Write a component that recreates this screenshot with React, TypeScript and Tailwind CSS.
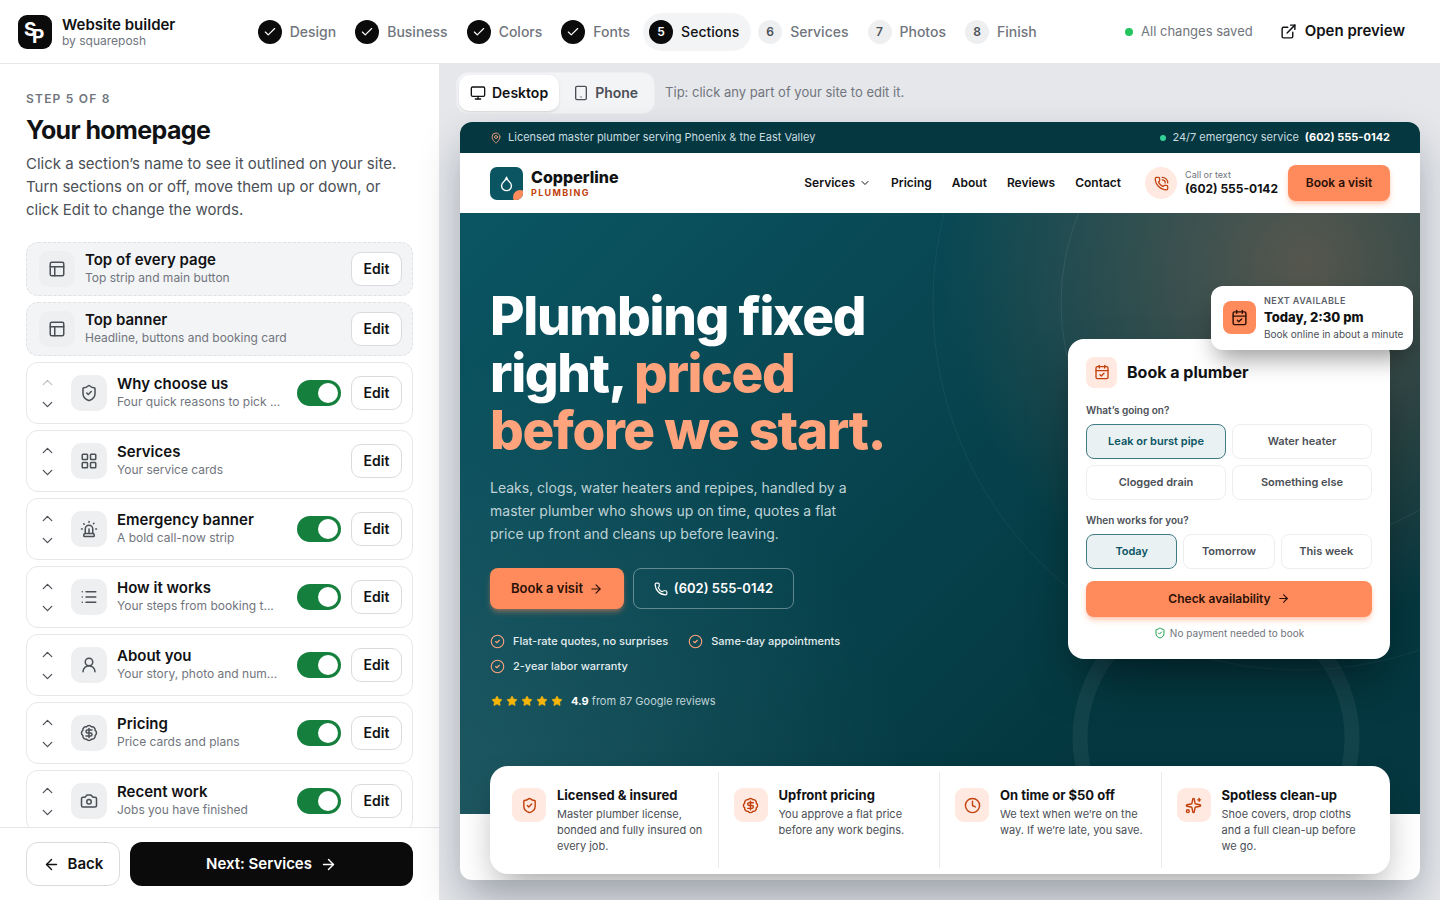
import React, { useState } from 'react';
import {
    ArrowLeft,
    ArrowRight,
    BadgeDollarSign,
    CalendarCheck,
    Camera,
    Check,
    ChevronDown,
    ChevronUp,
    CircleCheck,
    Clock,
    Droplet,
    ExternalLink,
    LayoutGrid,
    List,
    MapPin,
    Monitor,
    PanelsTopLeft,
    Phone,
    PhoneCall,
    ShieldCheck,
    Siren,
    Sparkles,
    Star,
    Tablet,
    UserRound,
    type LucideIcon,
} from 'lucide-react';

const CURRENT_STEP = 5;
const STEPS = ['Design', 'Business', 'Colors', 'Fonts', 'Sections', 'Services', 'Photos', 'Finish'];

interface Section {
    title: string;
    description: string;
    icon: LucideIcon;
    required?: boolean;
}

const FIXED_SECTIONS: Section[] = [
    { title: 'Top of every page', description: 'Top strip and main button', icon: PanelsTopLeft },
    { title: 'Top banner', description: 'Headline, buttons and booking card', icon: PanelsTopLeft },
];

const SECTIONS: Section[] = [
    { title: 'Why choose us', description: 'Four quick reasons to pick ...', icon: ShieldCheck },
    { title: 'Services', description: 'Your service cards', icon: LayoutGrid, required: true },
    { title: 'Emergency banner', description: 'A bold call-now strip', icon: Siren },
    { title: 'How it works', description: 'Your steps from booking t...', icon: List },
    { title: 'About you', description: 'Your story, photo and num...', icon: UserRound },
    { title: 'Pricing', description: 'Price cards and plans', icon: BadgeDollarSign },
    { title: 'Recent work', description: 'Jobs you have finished', icon: Camera },
];

const FEATURES: { title: string; text: string; icon: LucideIcon }[] = [
    { title: 'Licensed & insured', text: 'Master plumber license, bonded and fully insured on every job.', icon: ShieldCheck },
    { title: 'Upfront pricing', text: 'You approve a flat price before any work begins.', icon: BadgeDollarSign },
    { title: 'On time or $50 off', text: 'We text when we’re on the way. If we’re late, you save.', icon: Clock },
    { title: 'Spotless clean-up', text: 'Shoe covers, drop cloths and a full clean-up before we go.', icon: Sparkles },
];

const Logo: React.FC = () => (
    <svg viewBox="0 0 34 34" className="size-[34px] shrink-0" role="img" aria-label="squareposh">
        <rect width="34" height="34" rx="9" fill="#0b0b0c" />
        <g fill="#fff" fontFamily="Inter, sans-serif" fontWeight="700">
            <text x="6" y="21" fontSize="19">S</text>
            <text x="14" y="28" fontSize="19">P</text>
        </g>
    </svg>
);

const TopBar: React.FC = () => (
    <header className="flex h-16 shrink-0 items-center justify-between border-b border-[#e5e7eb] bg-white pl-[18px] pr-6">
        <div className="flex items-center gap-2.5">
            <Logo />
            <div>
                <div className="text-[15px] leading-[18px] font-semibold text-[#111214]">Website builder</div>
                <div className="text-xs leading-[14px] text-[#71757d]">by squareposh</div>
            </div>
        </div>
        <nav aria-label="Steps" className="flex items-center gap-px">
            {STEPS.map((name, idx) => {
                const step = idx + 1;
                const done = step < CURRENT_STEP;
                const current = step === CURRENT_STEP;
                return (
                    <button
                        key={name}
                        aria-current={current ? 'step' : undefined}
                        className={`flex items-center gap-2 rounded-full py-[7px] pl-1.5 pr-3 text-sm font-medium ${current ? 'bg-[#f3f4f6] text-[#111214]' : 'text-[#71757d]'}`}
                    >
                        <span
                            className={`flex size-6 items-center justify-center rounded-full text-xs font-semibold ${done || current ? 'bg-[#0b0b0c] text-white' : 'bg-[#eeeff1] text-[#4b4f56]'}`}
                        >
                            {done ? <Check size={14} /> : step}
                        </span>
                        {name}
                    </button>
                );
            })}
        </nav>
        <div className="flex items-center gap-4">
            <span className="flex items-center gap-2 text-[13px] text-[#71757d]">
                <span className="size-2 rounded-full bg-[#22c55e]" />
                All changes saved
            </span>
            <a href="#preview" className="flex items-center gap-2 px-[11px] py-2 text-[15px] font-semibold text-[#111214]">
                <ExternalLink size={17} />
                Open preview
            </a>
        </div>
    </header>
);

const EditButton: React.FC<{ title: string }> = ({ title }) => (
    <button
        aria-label={`Edit ${title}`}
        className="h-[34px] w-[51px] shrink-0 rounded-[10px] border border-[#d9dbdf] bg-white text-sm font-semibold text-[#111214]"
    >
        Edit
    </button>
);

const SectionLabel: React.FC<{ section: Section }> = ({ section }) => {
    const Icon = section.icon;
    return (
        <>
            <span className="flex size-9 shrink-0 items-center justify-center rounded-[10px] bg-[#eeeff1] text-[#4b4f56]">
                <Icon size={18} />
            </span>
            <button className="min-w-0 flex-1 text-left">
                <span className="block truncate text-[15px] leading-[18px] font-semibold text-[#111214]">{section.title}</span>
                <span className="block truncate text-xs leading-[18px] text-[#71757d]">{section.description}</span>
            </button>
        </>
    );
};

const SectionRow: React.FC<{ section: Section; first: boolean }> = ({ section, first }) => {
    const [enabled, setEnabled] = useState(true);

    return (
        <li className="flex h-[62px] shrink-0 items-center gap-2.5 rounded-xl border border-[#e5e7eb] bg-white pl-1 pr-2.5">
            <span className="-mr-0.5 flex w-8 shrink-0 flex-col items-center text-[#4b4f56]">
                <button aria-label={`Move ${section.title} up`} disabled={first} className="flex h-[22px] w-8 items-center justify-center disabled:opacity-35">
                    <ChevronUp size={17} strokeWidth={1.75} />
                </button>
                <button aria-label={`Move ${section.title} down`} className="flex h-[22px] w-8 items-center justify-center">
                    <ChevronDown size={17} strokeWidth={1.75} />
                </button>
            </span>
            <SectionLabel section={section} />
            {!section.required && (
                <label className="relative h-[26px] w-11 shrink-0 cursor-pointer">
                    <input
                        type="checkbox"
                        role="switch"
                        aria-label={`Show ${section.title}`}
                        checked={enabled}
                        onChange={() => setEnabled(!enabled)}
                        className="peer sr-only"
                    />
                    <span className="flex h-full items-center rounded-full bg-[#c9ccd1] px-[3px] peer-checked:justify-end peer-checked:bg-[#15803d]">
                        <span className="size-5 rounded-full bg-white" />
                    </span>
                </label>
            )}
            <EditButton title={section.title} />
        </li>
    );
};

const Sidebar: React.FC = () => (
    <aside className="flex w-[440px] shrink-0 flex-col border-r border-[#e5e7eb] bg-white">
        <div className="min-h-0 flex-1 overflow-y-auto px-[26px] pt-[26px] [scrollbar-width:none]">
            <p className="text-xs leading-[18px] font-semibold tracking-widest text-[#71757d]">STEP 5 OF 8</p>
            <h1 className="mt-1.5 text-[25px] leading-8 font-bold tracking-tight text-[#111214]">Your homepage</h1>
            <p className="mt-1.5 text-[15px] leading-[23px] text-[#4b4f56]">
                Click a section’s name to see it outlined on your site. Turn sections on or off, move them up or down, or click Edit to change the words.
            </p>
            <ul className="mt-[21px] flex flex-col gap-1.5 pb-6">
                {FIXED_SECTIONS.map((section) => (
                    <li key={section.title} className="flex h-[54px] shrink-0 items-center gap-2.5 rounded-xl border border-dashed border-[#dfe1e5] bg-[#f3f4f6] pl-3 pr-2.5">
                        <SectionLabel section={section} />
                        <EditButton title={section.title} />
                    </li>
                ))}
                {SECTIONS.map((section, idx) => (
                    <SectionRow key={section.title} section={section} first={idx === 0} />
                ))}
            </ul>
        </div>
        <div className="flex shrink-0 gap-2.5 border-t border-[#e5e7eb] px-[26px] py-3.5">
            <button className="flex h-11 w-[94px] items-center justify-center gap-2 rounded-xl border border-[#d9dbdf] text-[15px] font-semibold text-[#111214]">
                <ArrowLeft size={17} />
                Back
            </button>
            <button className="flex h-11 flex-1 items-center justify-center gap-2 rounded-xl bg-[#0b0b0c] text-[15px] font-semibold text-white">
                Next: Services
                <ArrowRight size={17} />
            </button>
        </div>
    </aside>
);

const Toolbar: React.FC = () => (
    <div className="flex items-center gap-2.5 pt-2 pl-4">
        <div className="flex rounded-xl border border-[#eceef1] bg-[#f3f4f6] p-0.5 text-sm font-semibold">
            <button aria-pressed="true" className="flex h-9 items-center gap-1.5 rounded-[10px] bg-white px-[11px] text-[#111214] shadow-sm">
                <Monitor size={16} />
                Desktop
            </button>
            <button aria-pressed="false" className="flex h-9 items-center gap-1.5 rounded-[10px] px-3.5 text-[#4b4f56]">
                <Tablet size={16} />
                Phone
            </button>
        </div>
        <p className="text-[13px] text-[#71757d]">Tip: click any part of your site to edit it.</p>
    </div>
);

const SiteHeader: React.FC = () => (
    <>
        <div className="flex h-[31px] shrink-0 items-center justify-between bg-[#04373f] px-[30px] text-[11px] text-[#c9dde0]">
            <span className="flex items-center gap-1.5">
                <MapPin size={12} strokeWidth={1.75} className="text-[#ffa37d]" />
                Licensed master plumber serving Phoenix &amp; the East Valley
            </span>
            <span className="flex items-center gap-1.5">
                <span className="size-1.5 rounded-full bg-[#34d399]" />
                24/7 emergency service
                <a href="#call" className="font-bold text-white">(602) 555-0142</a>
            </span>
        </div>
        <div className="flex h-[60px] shrink-0 items-center bg-white px-[30px]">
            <a href="#home" className="flex items-center gap-2">
                <span className="relative flex size-[33px] items-center justify-center overflow-hidden rounded-[7px] bg-[#0b5563] text-white">
                    <Droplet size={17} />
                    <span className="absolute -right-1 -bottom-1 size-[14px] rounded-full bg-[#ff8a5b]" />
                </span>
                <span className="flex flex-col">
                    <span className="text-base leading-[19px] font-extrabold text-[#111214]">Copperline</span>
                    <span className="text-[9px] leading-3 font-bold tracking-[0.15em] text-[#c2410c]">PLUMBING</span>
                </span>
            </a>
            <nav className="ml-auto flex items-center gap-5 text-xs font-semibold text-[#111214]">
                <a href="#services" className="flex items-center gap-1">
                    Services
                    <ChevronDown size={12} />
                </a>
                <a href="#pricing">Pricing</a>
                <a href="#about">About</a>
                <a href="#reviews">Reviews</a>
                <a href="#contact">Contact</a>
            </nav>
            <div className="ml-6 flex items-center gap-2">
                <span className="flex size-8 items-center justify-center rounded-full bg-[#ffe9e0] text-[#c2410c]">
                    <PhoneCall size={15} />
                </span>
                <span className="flex flex-col">
                    <span className="text-[9px] leading-3 text-[#71757d]">Call or text</span>
                    <a href="#call" className="text-xs leading-4 font-bold text-[#111214]">(602) 555-0142</a>
                </span>
            </div>
            <button className="ml-2.5 h-9 w-[102px] rounded-lg bg-[#ff8a5b] text-xs font-semibold text-[#2a1006] shadow-md shadow-[#ff8a5b]/40">
                Book a visit
            </button>
        </div>
    </>
);

const Option: React.FC<{ group: string; label: string; selected: string; onSelect: (label: string) => void }> = ({ group, label, selected, onSelect }) => (
    <label
        className={`relative flex h-[35px] cursor-pointer items-center justify-center rounded-lg border text-[11px] font-semibold ${selected === label ? 'border-[#3f7b86] bg-[#eaf1f3] text-[#0b5563]' : 'border-[#eceef0] bg-white text-[#4b4f56]'}`}
    >
        <input type="radio" name={group} checked={selected === label} onChange={() => onSelect(label)} className="sr-only" />
        {label}
    </label>
);

const BookingCard: React.FC = () => {
    const [issue, setIssue] = useState('Leak or burst pipe');
    const [day, setDay] = useState('Today');

    return (
        <div className="relative w-[322px] shrink-0 rounded-2xl bg-white p-[18px] shadow-[0_24px_48px_-12px_rgba(0,0,0,0.5)]">
            <div className="absolute -top-[53px] -right-[23px] flex w-[202px] items-center gap-2 rounded-xl bg-white py-2 pl-3 shadow-[0_14px_24px_-6px_rgba(0,0,0,0.4)]">
                <span className="flex size-[33px] shrink-0 items-center justify-center rounded-lg bg-[#ff8a5b] text-[#2a1006]">
                    <CalendarCheck size={17} />
                </span>
                <span className="flex flex-col whitespace-nowrap">
                    <span className="text-[9px] leading-[14px] font-semibold tracking-wider text-[#5c6068]">NEXT AVAILABLE</span>
                    <span className="text-[13px] leading-[18px] font-extrabold text-[#111214]">Today, 2:30 pm</span>
                    <span className="text-[10px] leading-4 text-[#4b4f56]">Book online in about a minute</span>
                </span>
            </div>
            <h3 className="flex items-center gap-2.5 text-base font-bold text-[#111214]">
                <span className="flex size-[31px] items-center justify-center rounded-lg bg-[#ffe9e0] text-[#c2410c]">
                    <CalendarCheck size={16} />
                </span>
                Book a plumber
            </h3>
            <fieldset className="mt-3.5">
                <legend className="text-[10px] leading-4 font-semibold text-[#4b4f56]">What’s going on?</legend>
                <div className="mt-1.5 grid grid-cols-2 gap-1.5">
                    {['Leak or burst pipe', 'Water heater', 'Clogged drain', 'Something else'].map((label) => (
                        <Option key={label} group="issue" label={label} selected={issue} onSelect={setIssue} />
                    ))}
                </div>
            </fieldset>
            <fieldset className="mt-3">
                <legend className="text-[10px] leading-4 font-semibold text-[#4b4f56]">When works for you?</legend>
                <div className="mt-1.5 grid grid-cols-3 gap-1.5">
                    {['Today', 'Tomorrow', 'This week'].map((label) => (
                        <Option key={label} group="day" label={label} selected={day} onSelect={setDay} />
                    ))}
                </div>
            </fieldset>
            <button className="mt-3 flex h-9 w-full items-center justify-center gap-1.5 rounded-lg bg-[#ff8a5b] text-xs font-semibold text-[#2a1006] shadow-md shadow-[#ff8a5b]/40">
                Check availability
                <ArrowRight size={13} />
            </button>
            <p className="mt-2 flex items-center justify-center gap-1 text-[10px] leading-4 text-[#71757d]">
                <ShieldCheck size={12} className="text-[#16a34a]" />
                No payment needed to book
            </p>
        </div>
    );
};

// Rings drawn behind the booking card, anchored to the right edge of the hero
const HeroRings: React.FC = () => (
    <svg viewBox="0 0 520 602" className="pointer-events-none absolute top-0 right-0 h-[602px] w-[520px]" fill="none" stroke="#fff" aria-hidden="true">
        <circle cx="400" cy="90" r="239" strokeOpacity="0.08" />
        <circle cx="400" cy="90" r="367" strokeOpacity="0.05" />
        <circle cx="316" cy="525" r="136" strokeOpacity="0.06" strokeWidth="15" />
    </svg>
);

const Hero: React.FC = () => (
    <div className="relative shrink-0 overflow-hidden bg-[radial-gradient(circle_at_88%_8%,rgba(255,138,91,0.32),transparent_36%),radial-gradient(circle_at_0%_100%,rgba(255,255,255,0.09),transparent_40%),linear-gradient(135deg,#0b5563_0%,#04373f_75%)]">
        <HeroRings />
        <div className="relative flex items-center justify-between px-[30px] pt-[75px] pb-[105px]">
            <div className="w-[400px]">
                <h2 className="text-[53px] leading-[57px] font-extrabold tracking-tight text-white">
                    Plumbing fixed right, <span className="text-[#ffa37d]">priced</span>
                    <span className="block text-[#ffa37d]">before we start.</span>
                </h2>
                <p className="mt-[17px] w-[370px] text-sm leading-[23px] text-[#bfd3d7]">
                    Leaks, clogs, water heaters and repipes, handled by a master plumber who shows up on time, quotes a flat price up front and cleans up before leaving.
                </p>
                <div className="mt-[23px] flex gap-[9px]">
                    <button className="flex h-[41px] w-[134px] items-center justify-center gap-1.5 rounded-lg bg-[#ff8a5b] text-[13px] font-semibold text-[#2a1006] shadow-md shadow-[#ff8a5b]/40">
                        Book a visit
                        <ArrowRight size={14} />
                    </button>
                    <a href="#call" className="flex h-[41px] w-[161px] items-center justify-center gap-1.5 rounded-lg border border-white/35 text-[13px] font-semibold text-white">
                        <Phone size={14} />
                        (602) 555-0142
                    </a>
                </div>
                <ul className="mt-6 flex flex-wrap gap-x-5 gap-y-[9px] text-[11px] leading-4 font-medium text-[#e3edef]">
                    {['Flat-rate quotes, no surprises', 'Same-day appointments', '2-year labor warranty'].map((item) => (
                        <li key={item} className="flex items-center gap-2">
                            <CircleCheck size={15} strokeWidth={1.75} className="text-[#ffa37d]" />
                            {item}
                        </li>
                    ))}
                </ul>
                <div className="mt-[19px] flex items-center gap-2 text-[11px] leading-4 text-[#bfd3d7]">
                    <span className="flex gap-[3px] pl-px" role="img" aria-label="5 out of 5 stars">
                        {[1, 2, 3, 4, 5].map((n) => (
                            <Star key={n} size={12} strokeWidth={1} className="fill-[#f5b50a] text-[#f5b50a]" />
                        ))}
                    </span>
                    <span>
                        <strong className="font-bold text-white">4.9</strong> from 87 Google reviews
                    </span>
                </div>
            </div>
            <BookingCard />
        </div>
    </div>
);

const Features: React.FC = () => (
    <div className="relative mx-[30px] -mt-12 grid shrink-0 grid-cols-4 divide-x divide-[#e9ebee] rounded-[18px] bg-white px-[7px] py-1.5 shadow-[0_18px_36px_-8px_rgba(0,0,0,0.36)]">
        {FEATURES.map(({ title, text, icon: Icon }) => (
            <div key={title} className="flex gap-[11px] px-[15px] pt-4">
                <span className="flex size-[34px] shrink-0 items-center justify-center rounded-[9px] bg-[#ffe9e0] text-[#c2410c]">
                    <Icon size={17} />
                </span>
                <div className="pb-3.5">
                    <h3 className="-mt-0.5 text-[13px] leading-[18px] font-bold whitespace-nowrap text-[#111214]">{title}</h3>
                    <p className="mt-0.5 text-[11px] leading-4 text-[#4b4f56]">{text}</p>
                </div>
            </div>
        ))}
    </div>
);

const App: React.FC = () => (
    <div className="flex h-screen flex-col overflow-hidden font-['Inter','Liberation_Sans',sans-serif] antialiased">
        <TopBar />
        <div className="flex min-h-0 flex-1">
            <Sidebar />
            <main className="flex min-w-0 flex-1 flex-col bg-[#e5e7eb]">
                <Toolbar />
                <div id="preview" className="mx-5 mt-2 mb-5 flex min-h-0 flex-1 flex-col overflow-hidden rounded-xl bg-white shadow-[0_20px_44px_-6px_rgba(17,24,39,0.38)]">
                    <SiteHeader />
                    <Hero />
                    <Features />
                </div>
            </main>
        </div>
    </div>
);

export default App;
